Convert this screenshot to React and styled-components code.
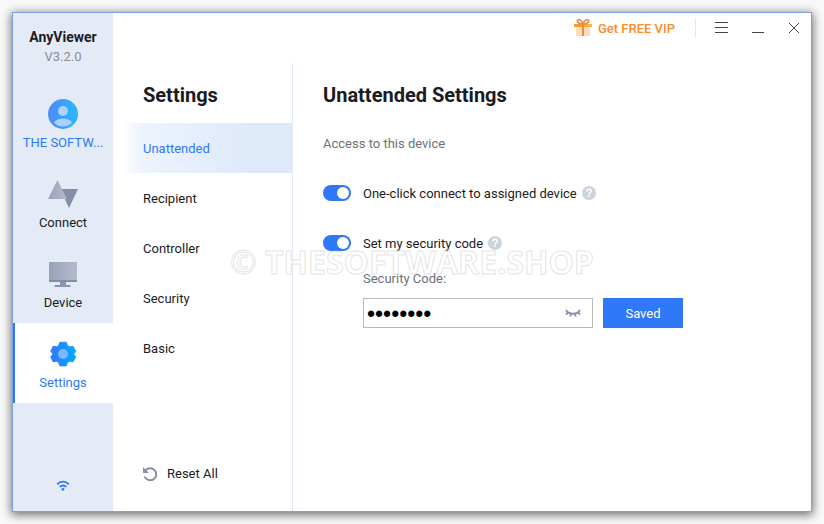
import React, { useState } from 'react';
import styled, { createGlobalStyle, css } from 'styled-components';

const colors = {
  primary: '#2f78f8',
  text: '#1b1b22',
  muted: '#6f7078',
  sidebar: '#e4ebf7',
  line: '#e2e8f8',
  icon: '#868ea8',
  orange: '#fa8c2a',
};

const GlobalStyle = createGlobalStyle`
  *,
  *::before,
  *::after {
    box-sizing: border-box;
  }

  body {
    margin: 0;
    background: #f9f9f9;
    color: ${colors.text};
    font-family: Roboto, "Liberation Sans", sans-serif;
    font-size: 13px;
    line-height: 20px;
  }

  button,
  input {
    font: inherit;
  }
`;

const Page = styled.div`
  display: flex;
  min-height: 100vh;
  padding: 12px;
`;

const Window = styled.div`
  position: relative;
  display: flex;
  flex: 1;
  border: 1px solid #7ba0e4;
  background: #fff;
  box-shadow: 0 2px 9px 1px rgba(0, 0, 0, 0.55);
`;

const Sidebar = styled.aside`
  display: flex;
  flex-direction: column;
  flex: none;
  width: 100px;
  background: ${colors.sidebar};
  text-align: center;
`;

const Brand = styled.header`
  height: 70px;
  padding-top: 14px;
`;

const BrandName = styled.div`
  font-size: 14px;
  font-weight: 700;
`;

const Version = styled.div`
  color: #8b8b90;
`;

const SideItem = styled.button`
  display: flex;
  flex-direction: column;
  align-items: center;
  gap: 4px;
  width: 100%;
  height: 80px;
  padding: 16px 0 0;
  border: 0;
  background: none;
  color: ${({ $blue }) => ($blue ? colors.primary : colors.text)};
  cursor: pointer;

  ${({ $active }) => $active && css`
    background: #fff;
    box-shadow: inset 2px 0 ${colors.primary};
  `}
`;

const Network = styled.div`
  display: flex;
  justify-content: center;
  margin-top: auto;
  padding-bottom: 19px;
`;

const Content = styled.div`
  display: flex;
  flex: 1;
  flex-direction: column;
  min-width: 0;
`;

const TopBar = styled.div`
  display: flex;
  align-items: flex-start;
  justify-content: flex-end;
  height: 50px;
  padding: 5px 7px 0 0;
`;

const VipLink = styled.a`
  display: flex;
  align-items: flex-start;
  gap: 6px;
  margin-right: 20px;
  color: ${colors.orange};
  font-weight: 500;
  line-height: 22px;
  text-decoration: none;
`;

const Divider = styled.span`
  width: 1px;
  height: 20px;
  margin-right: 16px;
  background: ${colors.line};
`;

const WindowButtons = styled.div`
  display: flex;
  gap: 16px;
`;

const WindowButton = styled.button`
  display: flex;
  padding: 0;
  border: 0;
  background: none;
  cursor: pointer;
`;

const Body = styled.div`
  display: flex;
  flex: 1;
`;

const Nav = styled.nav`
  display: flex;
  flex: none;
  flex-direction: column;
  width: 180px;
  padding-bottom: 13px;
  border-right: 1px solid ${colors.line};
`;

const Title = styled.h2`
  height: 60px;
  margin: 0;
  font-size: 20px;
  font-weight: 700;
  line-height: 64px;
`;

const NavTitle = styled(Title)`
  padding-left: 30px;
`;

const NavItem = styled.button`
  height: 50px;
  padding: 2px 30px 0;
  border: 0;
  background: none;
  color: ${colors.text};
  text-align: left;
  cursor: pointer;

  ${({ $active }) => $active && css`
    background: linear-gradient(90deg, #fff 5%, #edf4fd 16%, #dee9fa 75%);
    color: ${colors.primary};
  `}
`;

const ResetButton = styled(NavItem)`
  display: flex;
  align-items: center;
  gap: 10px;
  margin-top: auto;
`;

const Main = styled.main`
  flex: 1;
  padding: 0 30px;
`;

const Description = styled.p`
  margin: 11px 0 14px;
  color: ${colors.muted};
`;

const SettingRow = styled.div`
  display: flex;
  align-items: center;
  gap: 5px;
  height: 50px;
`;

const SwitchLabel = styled.label`
  display: flex;
  align-items: center;
  gap: 12px;
  cursor: pointer;
`;

const SwitchText = styled.span`
  padding-top: 2px;
`;

const Switch = styled.input`
  display: flex;
  align-items: center;
  width: 28px;
  height: 16px;
  margin: 0;
  padding: 0 2px;
  border-radius: 8px;
  background: #c4ccd9;
  appearance: none;
  cursor: pointer;

  &::before {
    width: 12px;
    height: 12px;
    border-radius: 50%;
    background: #fff;
    content: "";
  }

  &:checked {
    justify-content: flex-end;
    background: ${colors.primary};
  }
`;

const Help = styled.button`
  display: flex;
  padding: 0;
  border: 0;
  background: none;
`;

const CodeForm = styled.form`
  padding: 1px 0 0 40px;
`;

const CodeLabel = styled.label`
  display: block;
  margin-bottom: 9px;
  color: ${colors.muted};
`;

const CodeRow = styled.div`
  display: flex;
  gap: 10px;
`;

const CodeField = styled.div`
  display: flex;
  align-items: center;
  width: 230px;
  height: 30px;
  padding-right: 11px;
  border: 1px solid #b9babd;
`;

const CodeInput = styled.input`
  flex: 1;
  min-width: 0;
  height: 28px;
  padding: 2px 3px 0;
  border: 0;
  outline: 0;
  background: none;
  color: #000;
  font-family: "Liberation Sans", sans-serif;
  font-size: 23px;
`;

const SaveButton = styled.button`
  width: 80px;
  height: 30px;
  padding: 2px 0 0;
  border: 0;
  background: ${colors.primary};
  color: #fff;
  cursor: pointer;
`;

const Watermark = styled.div`
  position: absolute;
  inset: 0;
  display: flex;
  align-items: center;
  justify-content: center;
  color: transparent;
  font-family: "Open Sans", sans-serif;
  font-size: 32px;
  font-weight: 700;
  white-space: nowrap;
  pointer-events: none;
  -webkit-text-stroke: 1px rgba(205, 205, 205, 0.55);
`;

const AccountIcon = () => (
  <svg width="30" height="30" viewBox="0 0 30 30">
    <defs>
      <linearGradient id="account">
        <stop offset="0.2" stopColor="#4a90fb" />
        <stop offset="0.8" stopColor="#2fb1ff" />
      </linearGradient>
    </defs>
    <circle cx="15" cy="15" r="15" fill="url(#account)" />
    <circle cx="15" cy="12" r="5" fill="#a9d3fc" />
    <path d="M6 23.5c2-3 5.5-4 9-4s7 1 9 4c-2 2.600-5.500 4-9 4s-7-1.400-9-4z" fill="#a9d3fc" />
  </svg>
);

const ConnectIcon = () => (
  <svg width="30" height="30" viewBox="0 0 30 30">
    <defs>
      <linearGradient id="connect">
        <stop offset="0" stopColor="#9aa2b9" />
        <stop offset="1" stopColor="#b4bacd" />
      </linearGradient>
    </defs>
    <path d="M12 10h18l-9 19z" fill="#858da6" />
    <path d="M9.500 1l9.500 19H0z" fill="url(#connect)" />
  </svg>
);

const DeviceIcon = () => (
  <svg width="30" height="30" viewBox="0 0 30 30">
    <path d="M12 22h6v4h4.500v2h-16v-2H12z" fill="#8c94ad" />
    <path d="M1 3h28v20H1z" fill="url(#connect)" />
    <path d="M1 21h28v2H1z" fill="#858da6" />
  </svg>
);

const SettingsIcon = () => (
  <svg width="30" height="30" viewBox="0 0 30 30">
    <defs>
      <linearGradient id="gear">
        <stop offset="0.1" stopColor="#327bfb" />
        <stop offset="0.9" stopColor="#08a5ff" />
      </linearGradient>
    </defs>
    <path
      d="M11.500 2h7l1.500 4 2 1 4-.500 3 5.500-2.500 3 2.500 3-3 5.500-4-.500-2 1-1.500 4h-7L10 24l-2-1-4 .500L1.500 18 4 15l-2.500-3L4 6.500 8 7l2-1z"
      fill="url(#gear)"
      stroke="url(#gear)"
      strokeLinejoin="round"
      transform="translate(1.400 1.400) scale(.91)"
    />
    <circle cx="15" cy="15" r="5" fill="#78bafd" />
  </svg>
);

const WifiIcon = () => (
  <svg width="14" height="14" viewBox="0 0 14 14" fill="none" stroke={colors.primary} strokeWidth="1.800">
    <path d="M1.200 6.300c3.300-3.700 8.300-3.700 11.600 0M3.800 9c1.900-2 4.500-2 6.400 0" />
    <circle cx="7" cy="11.300" r="1.400" fill={colors.primary} stroke="none" />
  </svg>
);

const GiftIcon = () => (
  <svg width="18" height="18" viewBox="0 0 18 18">
    <path d="M2 8h14v10H2z" fill="#fddcb9" />
    <path d="M0 6h18v3H0z" fill="#ffb13d" />
    <path d="M0 6h9v3H0z" fill="#fb982f" />
    <path d="M8 6h2v12H8z" fill="#f98b2b" />
    <path
      d="M9 6C6 6 3 4.800 3.300 2.800S7.500 1 9 6c1.500-5 5.400-5.200 5.700-3.200S12 6 9 6z"
      fill="none"
      stroke="#ef8a48"
      strokeWidth="1.700"
    />
  </svg>
);

const LineIcon = ({ d }) => (
  <svg width="20" height="20" viewBox="0 0 20 20" fill="none" stroke="#45464a">
    <path d={d} />
  </svg>
);

const HelpIcon = () => (
  <svg width="14" height="14" viewBox="0 0 14 14" fill="none">
    <circle cx="7" cy="7" r="7" fill="#cbd3df" />
    <path d="M4.900 5.400c0-2.800 4.300-2.600 4.300-.2C9.200 6.700 7 6.700 7 8.500" stroke="#fff" strokeWidth="1.500" />
    <path d="M6.200 9.500h1.600V11H6.200z" fill="#fff" />
  </svg>
);

const ClosedEyeIcon = () => (
  <svg width="16" height="10" viewBox="0 0 16 10" fill="none" stroke={colors.icon} strokeWidth="1.800">
    <path d="M1 2c3 5 11 5 14 0M3.500 4L1 6.500M6.300 5L5.200 8.500M9.700 5l1.100 3.500M12.500 4L15 6.500" />
  </svg>
);

const ResetIcon = () => (
  <svg width="14" height="14" viewBox="0 0 14 14" fill="none">
    <path d="M2.300 3.800A6 6 0 1 1 1.600 9.500" stroke={colors.icon} strokeWidth="2" />
    <path d="M0 0v6h6z" fill={colors.icon} />
  </svg>
);

const sideItems = [
  { label: 'THE SOFTW...', Icon: AccountIcon, blue: true },
  { label: 'Connect', Icon: ConnectIcon },
  { label: 'Device', Icon: DeviceIcon },
  { label: 'Settings', Icon: SettingsIcon, blue: true, active: true },
];

const tabs = ['Unattended', 'Recipient', 'Controller', 'Security', 'Basic'];

const windowButtons = [
  { label: 'Menu', d: 'M3 4.500h13M3 9.500h13M3 14.500h13' },
  { label: 'Minimize', d: 'M4 14.500h12' },
  { label: 'Close', d: 'M5 5l10 10M15 5l-10 10' },
];

const ToggleSetting = ({ label }) => (
  <SettingRow>
    <SwitchLabel>
      <Switch type="checkbox" role="switch" defaultChecked />
      <SwitchText>{label}</SwitchText>
    </SwitchLabel>
    <Help type="button" aria-label={`About: ${label}`}>
      <HelpIcon />
    </Help>
  </SettingRow>
);

const App = () => {
  const [tab, setTab] = useState('Unattended');
  const [visible, setVisible] = useState(false);

  return (
    <Page>
      <GlobalStyle />
      <Window>
        <Sidebar>
          <Brand>
            <BrandName>AnyViewer</BrandName>
            <Version>V3.2.0</Version>
          </Brand>
          {sideItems.map(({ label, Icon, blue, active }) => (
            <SideItem key={label} type="button" $blue={blue} $active={active}>
              <Icon />
              {label}
            </SideItem>
          ))}
          <Network>
            <WifiIcon />
          </Network>
        </Sidebar>
        <Content>
          <TopBar>
            <VipLink href="#vip">
              <GiftIcon />
              Get FREE VIP
            </VipLink>
            <Divider />
            <WindowButtons>
              {windowButtons.map(({ label, d }) => (
                <WindowButton key={label} type="button" aria-label={label}>
                  <LineIcon d={d} />
                </WindowButton>
              ))}
            </WindowButtons>
          </TopBar>
          <Body>
            <Nav>
              <NavTitle>Settings</NavTitle>
              {tabs.map((name) => (
                <NavItem
                  key={name}
                  type="button"
                  $active={name === tab}
                  onClick={() => setTab(name)}
                >
                  {name}
                </NavItem>
              ))}
              <ResetButton type="button">
                <ResetIcon />
                Reset All
              </ResetButton>
            </Nav>
            <Main>
              <Title>Unattended Settings</Title>
              <Description>Access to this device</Description>
              <ToggleSetting label="One-click connect to assigned device" />
              <ToggleSetting label="Set my security code" />
              <CodeForm onSubmit={(e) => e.preventDefault()}>
                <CodeLabel htmlFor="code">Security Code:</CodeLabel>
                <CodeRow>
                  <CodeField>
                    <CodeInput
                      id="code"
                      type={visible ? 'text' : 'password'}
                      defaultValue="12345678"
                    />
                    <Help
                      type="button"
                      aria-label="Show security code"
                      onClick={() => setVisible(!visible)}
                    >
                      <ClosedEyeIcon />
                    </Help>
                  </CodeField>
                  <SaveButton type="submit">Saved</SaveButton>
                </CodeRow>
              </CodeForm>
            </Main>
          </Body>
        </Content>
        <Watermark>© THESOFTWARE.SHOP</Watermark>
      </Window>
    </Page>
  );
};

export default App;
